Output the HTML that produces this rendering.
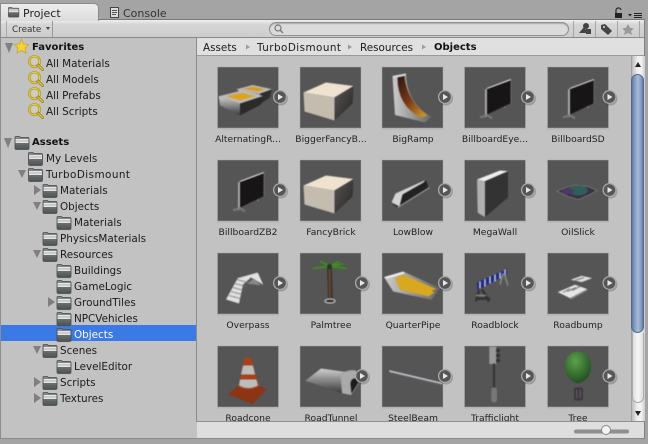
<!DOCTYPE html>
<html><head><meta charset="utf-8"><style>
html,body{margin:0;padding:0}
body{width:648px;height:444px;position:relative;overflow:hidden;background:#a4a4a4;font-family:"DejaVu Sans","Liberation Sans",sans-serif;color:#111}
div{position:absolute;box-sizing:border-box}
.t{white-space:nowrap;font-size:10.4px;line-height:14px;height:14px;color:#1a1a1a;margin-top:1px}
.b{font-weight:bold;font-size:10px;color:#111}
.l{white-space:nowrap;font-size:9.2px;line-height:12px;height:12px;width:82px;text-align:center;color:#222;margin-top:1px}
.w{letter-spacing:.45px}
svg{position:absolute;left:0;top:0}
.m{filter:blur(.4px)}
</style></head><body>
<div style="left:0;top:19px;width:645px;height:420px;background:#c2c2c2;border-left:1px solid #8d8d8d"></div>
<div style="left:0;top:19px;width:645px;height:1px;background:#777"></div>
<div style="left:1px;top:20px;width:644px;height:18px;background:linear-gradient(#f0f0f0,#d6d6d6 25%,#cdcdcd);border-bottom:1px solid #8a8a8a"></div>
<div style="left:0;top:3px;width:99px;height:18px;background:linear-gradient(#ececec,#dcdcdc);border:1px solid #8a8a8a;border-bottom:none;border-radius:0 5px 0 0"></div>
<div style="left:197px;top:38px;width:448px;height:18px;background:#e0e0e0;border-bottom:1px solid #9a9a9a"></div>
<div style="left:196px;top:38px;width:1px;height:384px;background:#8b8b8b"></div>
<div style="left:1px;top:325px;width:195px;height:16px;background:#3b79e6"></div>
<div style="left:197px;top:421px;width:448px;height:18px;background:#dedede;border-top:1px solid #8f8f8f"></div>
<div style="left:644px;top:19px;width:1px;height:420px;background:#808080"></div>
<div style="left:0;top:438px;width:645px;height:1px;background:#8a8a8a"></div>
<div style="left:6px;top:21px;width:47px;height:16px;border-left:1px solid #aaa;border-right:1px solid #999"></div>
<div style="left:269px;top:22px;width:300px;height:14px;border-radius:7px;border:1px solid #8f8f8f;background:#dbdbdb;box-shadow:inset 0 1px 1px #aaa"></div>
<div style="left:573px;top:21px;width:1px;height:16px;background:#a5a5a5"></div>
<div style="left:595px;top:21px;width:1px;height:16px;background:#a5a5a5"></div>
<div style="left:617px;top:21px;width:1px;height:16px;background:#a5a5a5"></div>
<div style="left:639px;top:21px;width:1px;height:16px;background:#a5a5a5"></div>

<div style="left:631px;top:56px;width:14px;height:365px;background:linear-gradient(90deg,#bbb,#eee 40%,#f3f3f3 70%,#ccc);border-left:1px solid #a0a0a0"></div>
<div style="left:631px;top:74px;width:13px;height:259px;border-radius:7px;background:linear-gradient(90deg,#5f7da8,#8aa2c6 30%,#a9bcd8 55%,#7e98bf 85%,#58739c);border:1px solid #52698c"></div>
<div style="left:632px;top:333px;width:12px;height:70px;border-radius:0 0 7px 7px;background:linear-gradient(90deg,#ddd,#f7f7f7 50%,#ddd);border:1px solid #aaa;border-top:none"></div>

<svg width="648" height="444" viewBox="0 0 648 444">
<defs>
<linearGradient id="fg" x1="0" y1="0" x2="0" y2="1"><stop offset="0" stop-color="#8a9090"/><stop offset="1" stop-color="#4c5254"/></linearGradient>
<linearGradient id="gm" x1="0" y1="0" x2="0" y2="1"><stop offset="0" stop-color="#d0d0d0"/><stop offset="1" stop-color="#3a3a3a"/></linearGradient>
<linearGradient id="gw" x1="0" y1="0" x2="1" y2="0"><stop offset="0" stop-color="#bbb"/><stop offset="1" stop-color="#555"/></linearGradient>
<linearGradient id="gr" x1="0" y1="0" x2="1" y2="1"><stop offset="0" stop-color="#2a1512"/><stop offset=".5" stop-color="#7a3a15"/><stop offset="1" stop-color="#e0a420"/></linearGradient>
<linearGradient id="gs" x1="0" y1="0" x2="1" y2="0"><stop offset="0" stop-color="#ccc"/><stop offset="1" stop-color="#666"/></linearGradient>
<linearGradient id="gd" x1="0" y1="0" x2="1" y2="1"><stop offset="0" stop-color="#5a5855"/><stop offset="1" stop-color="#222"/></linearGradient>
<radialGradient id="gt" cx=".4" cy=".3" r=".75"><stop offset="0" stop-color="#5da24c"/><stop offset="1" stop-color="#1c4a1e"/></radialGradient>
<g id="folder"><path d="M0.500 3V1.500Q.5 .5 1.500 .5H5L6 1.500H13.500Q14.500 1.500 14.500 3V12Q14.500 13.500 13 13.500H2Q.5 13.500 .5 12Z" fill="url(#fg)" stroke="#4a4a4a" stroke-width=".8"/><path d="M1 3H14V6.500H1Z" fill="#e4e4e4"/><path d="M1 5H14" stroke="#b4b4b4"/><path d="M1 6.500H14" stroke="#f5f5f5" stroke-width=".8"/></g>
<g id="find"><circle cx="6.500" cy="6.500" r="5.200" fill="#e2e2d0" fill-opacity=".35" stroke="#8a7a20" stroke-width="2.200"/><circle cx="6.500" cy="6.500" r="5.200" fill="none" stroke="#ecca26" stroke-width="1.300"/><path d="M10 10L14.500 14.500" stroke="#8a7a20" stroke-width="2.800" stroke-linecap="round"/><path d="M10 10L14.500 14.500" stroke="#e6c222" stroke-width="1.500" stroke-linecap="round"/></g>
<g id="play"><circle cx="1" cy="1.500" r="7" fill="#000" opacity=".2"/><circle r="6.400" fill="#565656" stroke="#a8a8a8" stroke-width="1.300"/><path d="M-2-3L3 0L-2 3Z" fill="#e8e8e8"/></g>
<g id="tile"><rect x="-1" y="-1" width="62" height="63" fill="#000" opacity=".07"/><rect x="-.5" y="-.5" width="61" height="61" fill="#7f7f7f"/><rect x="0" y="0" width="60" height="60" fill="#555"/></g>
<g id="bill" class="m"><path d="M22 21L46 12V36L22 47.500Z" fill="#171516"/><path d="M22 21L46 12" stroke="#ddd" stroke-width="1.200" fill="none"/><path d="M46 12V36" stroke="#777" stroke-width=".8"/><path d="M22 47.500L46 36" stroke="#555" stroke-width=".8"/><path d="M20 22L22 21V49L20 50Z" fill="#aaa"/><path d="M15 50L22 47.500L27 51" stroke="#7a7a7a" stroke-width="2" fill="none"/><path d="M40 39V40.500" stroke="#777" stroke-width="2"/></g>
<g id="brick" class="m"><path d="M3 25L25.500 15L53 18.500L34 30Z" fill="#efe3cf"/><path d="M3 25L34 30V53L4 44Z" fill="#c4bcae"/><path d="M34 30L53 18.500L52 36L34 53Z" fill="url(#gd)"/></g>
</defs>

<!-- tab icons -->
<g transform="translate(8,7) scale(.75)"><use href="#folder"/></g>
<path d="M110.500 7.500H118.500V17.500H110.500Z" fill="#ddd" stroke="#444"/><path d="M112 10.500H117M112 12.500H117M112 14.500H116" stroke="#555"/>
<path d="M616 13V11A2.500 2.500 0 0 1 621 10" stroke="#222" fill="none" stroke-width="1.200"/><rect x="615" y="13" width="7" height="5" fill="#222"/>
<path d="M628 14L632 14L630 16.500Z" fill="#222"/><path d="M634 13.500H642M634 15.500H642M634 17.500H642" stroke="#222"/>
<path d="M46 27L50 27L48 30Z" fill="#444"/>
<circle cx="278" cy="28" r="3" fill="none" stroke="#777" stroke-width="1.200"/><path d="M280 30L283 33" stroke="#777" stroke-width="1.400"/>
<!-- toolbar icons -->
<circle cx="586" cy="26" r="3" fill="#444"/><path d="M579 33L584 27L588 33Z" fill="#444"/><rect x="586" y="29" width="5" height="5" fill="#444"/>
<path d="M601 25L605 24L612 31L608 35L601 29Z" fill="#444"/><circle cx="604" cy="27" r="1" fill="#ddd"/>
<path d="M628 24L630 27.800L634 28.500L631 31L632 35L628 33L624 35L625 31L622 28.500L626 27.800Z" fill="#999"/>
<!-- breadcrumb arrows -->
<path d="M246 44.500L250 47L246 49.500ZM348 44.500L352 47L348 49.500ZM422 44.500L426 47L422 49.500Z" fill="#999"/>
<!-- scroll arrows -->
<path d="M638 62L641 67H635Z" fill="#222"/><path d="M635 411H641L638 416Z" fill="#222"/>
<!-- slider -->
<rect x="574" y="429.500" width="55" height="4" rx="2" fill="#8f8f8f"/><circle cx="606" cy="430" r="4.500" fill="#f4f4f4" stroke="#888"/>

<!-- tree icons -->
<path d="M5 43H13L9 53Z" fill="#808080"/>
<path d="M21.500 39L23.500 44L28.500 44.500L25 48L26 53L21.500 50.500L17 53L18 48L14.500 44.500L19.500 44Z" fill="#f5d431" stroke="#c7a52c" stroke-width=".8"/>
<use href="#find" x="28" y="55"/><use href="#find" x="28" y="71"/><use href="#find" x="28" y="87"/><use href="#find" x="28" y="103"/>
<path d="M4 138H12L8 148Z" fill="#808080"/><use href="#folder" x="14.500" y="136"/>
<use href="#folder" x="28" y="152"/>
<path d="M18 170H26L22 178Z" fill="#808080"/><use href="#folder" x="28" y="168"/>
<path d="M34 185L41 190L34 195Z" fill="#808080"/><use href="#folder" x="42.500" y="184"/>
<path d="M33 202H41L37 210Z" fill="#808080"/><use href="#folder" x="42.500" y="200"/>
<use href="#folder" x="56.500" y="216"/>
<use href="#folder" x="42.500" y="232"/>
<path d="M33 250H41L37 258Z" fill="#808080"/><use href="#folder" x="42.500" y="248"/>
<use href="#folder" x="56.500" y="264"/><use href="#folder" x="56.500" y="280"/>
<path d="M48 297L55 302L48 307Z" fill="#808080"/><use href="#folder" x="56.500" y="296"/>
<use href="#folder" x="56.500" y="312"/><use href="#folder" x="56.500" y="328"/>
<path d="M33 346H41L37 354Z" fill="#808080"/><use href="#folder" x="42.500" y="344"/>
<use href="#folder" x="56.500" y="360"/>
<path d="M34 377L41 382L34 387Z" fill="#808080"/><use href="#folder" x="42.500" y="376"/>
<path d="M34 393L41 398L34 403Z" fill="#808080"/><use href="#folder" x="42.500" y="392"/>

<!-- row1 -->
<g transform="translate(218,67.500)"><use href="#tile"/><g class="m">
<path d="M18.700 21.800L42 26L43 36L25 27Z" fill="url(#gm)"/><path d="M42 26L54 21.800L52 30L43 36Z" fill="#2e2e2e"/><path d="M18.700 21.800L34.700 17.500L54 21.800L42 26Z" fill="#bdbdbd"/><path d="M24 21.500L35 19.200L47 21.800L40 24Z" fill="#d89c1f"/>
<path d="M.7 28.800L22 36V48L2 38Z" fill="url(#gm)"/><path d="M22 36L45 28.500L43 37L22 48Z" fill="#2a2a2a"/><path d="M.7 28.800L24 23L45 28.500L22 36Z" fill="#bdbdbd"/><path d="M8 28.500L24 25.200L38 28.500L22 33Z" fill="#dca31f"/></g></g>
<g transform="translate(300.500,67.500)"><use href="#tile"/><use href="#brick"/></g>
<g transform="translate(382.500,67.500)"><use href="#tile"/><g class="m">
<path d="M10 8.500L23.500 6Q24 36 49 49L42.500 55L12.500 47.500Z" fill="url(#gs)"/><path d="M15 10L22 8.500Q24 33 45 48L38 50Q15 38 15 10Z" fill="url(#gr)"/><path d="M10 8.500L23.500 6L23 8L11 10Z" fill="#ddd"/></g></g>
<g transform="translate(465,67.500)"><use href="#tile"/><use href="#bill"/></g>
<g transform="translate(548,67.500)"><use href="#tile"/><use href="#bill"/></g>
<!-- row2 -->
<g transform="translate(218,160.500)"><use href="#tile"/><use href="#bill"/></g>
<g transform="translate(300.500,160.500)"><use href="#tile"/><use href="#brick"/></g>
<g transform="translate(382.500,160.500)"><use href="#tile"/><g class="m"><path d="M8.500 42L15 34L43.500 19.500L46 27L15 47Z" fill="#222"/><path d="M9 42L13 33L43 19.500L41 22L20 34L17 46Z" fill="#d4d4d4"/><path d="M15 47L47 27" stroke="#aaa"/></g></g>
<g transform="translate(465,160.500)"><use href="#tile"/><g class="m"><path d="M20 20.600L43 10.600V37L20 56.600Z" fill="#333"/><path d="M12 19L20 20.600V56.600L12.700 52.300Z" fill="#b0b0b0"/><path d="M12 19L35 10L43 10.600L20 20.600Z" fill="#eee"/></g></g>
<g transform="translate(548,160.500)"><use href="#tile"/><g class="m"><path d="M9 30.600L18 27L27 24.600L40 26L49 30L42 34L30.700 39L20 36Z" fill="#3a3048" stroke="#7a7a70" stroke-width=".8"/><ellipse cx="30" cy="30" rx="10" ry="5" fill="#2d6058"/><ellipse cx="20" cy="31" rx="6" ry="3" fill="#4a3a6a"/></g></g>
<!-- row3 -->
<g transform="translate(218,253.500)"><use href="#tile"/><g class="m">
<path d="M8 46L19.700 24.600L39.700 19L45.300 31.300L33 24L25 31L21 50Z" fill="#e0e0e0"/><path d="M29 30L36 25L43 32Z" fill="#888"/><path d="M11 42L22 45M13 38L24 41M15 34L26 37M17 30L28 33M19 26L30 29" stroke="#777" stroke-width=".9"/></g></g>
<g transform="translate(300.500,253.500)"><use href="#tile"/><g class="m">
<path d="M26.500 15L31.500 15L32.500 46H27.500Z" fill="#43342a"/><path d="M29 16L29.500 46" stroke="#6b5a48"/><ellipse cx="29.500" cy="47.500" rx="5" ry="2" fill="#333" stroke="#ddd"/><path d="M29 12.500L13 15M29 12.500L20 8M29 12.500L25 10M29 12.500L38 8.500M29 12.500L45 15M29 12.500L42 10.500M29 12.500L20 14" stroke="#3f8a22" stroke-width="2" stroke-linecap="round"/><circle cx="29" cy="13" r="2.500" fill="#1d3d14"/></g></g>
<g transform="translate(382.500,253.500)"><use href="#tile"/><g class="m"><path d="M1.500 23.600L20.800 18L57.500 34.600L49 46.300L10.800 38Z" fill="url(#gs)"/><path d="M1.500 23.600L20.800 18L22 20L5 25Z" fill="#eee"/><path d="M12.500 24.600L20.800 21.300L54 35.600L49 37L52 39L46 43L17.500 36.300Z" fill="#d8a81f"/></g></g>
<g transform="translate(465,253.500)"><use href="#tile"/><g class="m"><path d="M12 29L41.700 15.600L42.300 20.300L12.300 37Z" fill="#1d2a8a"/><path d="M15 28L15 35M20 25.500L20 33M25 23L25 30M30 21L30 28M35 19L35 25M40 16L40 22" stroke="#ccc" stroke-width="1.500"/><path d="M14 37L11 48M17 36L24 48M11 45H25" stroke="#333" stroke-width="2.500"/><path d="M11 42H21M38 20L35 31M39 20L43 32" stroke="#888" stroke-width="1.500"/></g></g>
<g transform="translate(548,253.500)"><use href="#tile"/><g class="m"><path d="M22.700 26.300L33.700 22.300L44.300 24.600L33.700 28.600Z" fill="#ddd"/><path d="M9.700 38.600L27 31.300L39.300 35.600L22 44.600Z" fill="#e6e6e6"/><path d="M27 27L36 24M24 37L32 33M19 38L28 34M15 39L22 35" stroke="#777"/><path d="M22 44.600L39.300 35.600V37L23 46Z" fill="#888"/></g></g>
<!-- row4 -->
<g transform="translate(218,346.500)"><use href="#tile"/><g class="m"><path d="M9.700 47.600L21 39H40L48.700 42.600L34.700 57.600Z" fill="#8c3413"/><path d="M26.500 11.500Q30 9.500 33 11.500L41 40Q30 46 20.500 40Z" fill="#a8421a"/><path d="M25 19L35 19L37 28L23 28ZM22 33L38.500 33L40 39Q30 44 21 39Z" fill="#bdbdbd"/></g></g>
<g transform="translate(300.500,346.500)"><use href="#tile"/><g class="m"><path d="M4.800 34.300L20.500 22L43.800 25.300L41.500 46.600Z" fill="url(#gm)"/><path d="M40 27Q50 22 55.500 24.300L58.800 36L50.500 48.600L41.500 46.600Z" fill="#aaa"/><path d="M50 38Q50 31 56 32L58 36L51 47Z" fill="#1c1c1c"/></g></g>
<g transform="translate(382.500,346.500)"><use href="#tile"/><g class="m"><path d="M6.800 24.500L60 37" stroke="#c8c8d4" stroke-width="1.600"/><path d="M7 26L60 39" stroke="#666" stroke-width=".8"/></g></g>
<g transform="translate(465,346.500)"><use href="#tile"/><g class="m"><rect x="24.300" y="0" width="7" height="17.500" fill="#999"/><circle cx="33" cy="4" r="2" fill="#333"/><circle cx="33" cy="9" r="2" fill="#333"/><circle cx="33" cy="14" r="2" fill="#333"/><rect x="28" y="17" width="2" height="26" fill="#333"/><rect x="26.300" y="41" width="5.700" height="15" rx="2.500" fill="#777"/></g></g>
<g transform="translate(548,346.500)"><use href="#tile"/><g class="m"><path d="M27 42H34M27 53H34M27 42V53M30.500 42V53M34 42V53" stroke="#3a2c3a" stroke-width="1.400"/><path d="M17 20Q17 6 30 5Q43 6 43 20Q43 33 30 37Q17 33 17 20Z" fill="url(#gt)"/></g></g>

<!-- play buttons -->
<use href="#play" x="280" y="97"/><use href="#play" x="445" y="97"/><use href="#play" x="528" y="97"/><use href="#play" x="609.500" y="97"/>
<use href="#play" x="280" y="190"/><use href="#play" x="445" y="190"/><use href="#play" x="528" y="190"/><use href="#play" x="609.500" y="190"/>
<use href="#play" x="280" y="283"/><use href="#play" x="362" y="283"/><use href="#play" x="445" y="283"/><use href="#play" x="528" y="283"/><use href="#play" x="609.500" y="283"/>
<use href="#play" x="362" y="376"/><use href="#play" x="445" y="376"/><use href="#play" x="528" y="376"/><use href="#play" x="609.500" y="376"/>
</svg>

<div class="t" style="left:23px;top:6px;font-size:11px;color:#222">Project</div>
<div class="t" style="left:123px;top:6px;font-size:11px;color:#333">Console</div>
<div class="t" style="left:12px;top:22px;font-size:8.800px;color:#333">Create</div>

<div class="t b" style="left:32px;top:40px">Favorites</div>
<div class="t" style="left:46px;top:56px">All Materials</div>
<div class="t" style="left:46px;top:72px">All Models</div>
<div class="t" style="left:46px;top:88px">All Prefabs</div>
<div class="t" style="left:46px;top:104px">All Scripts</div>
<div class="t b" style="left:32px;top:135px">Assets</div>
<div class="t" style="left:46px;top:151px">My Levels</div>
<div class="t w" style="left:46px;top:167px">TurboDismount</div>
<div class="t" style="left:60px;top:183px">Materials</div>
<div class="t" style="left:60px;top:199px">Objects</div>
<div class="t" style="left:74px;top:215px">Materials</div>
<div class="t" style="left:60px;top:231px">PhysicsMaterials</div>
<div class="t" style="left:60px;top:247px">Resources</div>
<div class="t" style="left:74px;top:263px">Buildings</div>
<div class="t" style="left:74px;top:279px">GameLogic</div>
<div class="t" style="left:74px;top:295px">GroundTiles</div>
<div class="t" style="left:74px;top:311px">NPCVehicles</div>
<div class="t" style="left:74px;top:327px;color:#fff">Objects</div>
<div class="t" style="left:60px;top:343px">Scenes</div>
<div class="t" style="left:74px;top:359px">LevelEditor</div>
<div class="t" style="left:60px;top:375px">Scripts</div>
<div class="t" style="left:60px;top:391px">Textures</div>

<div class="t" style="left:203px;top:40px">Assets</div>
<div class="t w" style="left:257px;top:40px">TurboDismount</div>
<div class="t" style="left:360px;top:40px">Resources</div>
<div class="t b" style="left:434px;top:40px">Objects</div>

<div class="l" style="left:207px;top:133px">AlternatingR...</div>
<div class="l" style="left:290px;top:133px">BiggerFancyB...</div>
<div class="l" style="left:372px;top:133px">BigRamp</div>
<div class="l" style="left:454px;top:133px">BillboardEye...</div>
<div class="l" style="left:537px;top:133px">BillboardSD</div>
<div class="l" style="left:207px;top:226px">BillboardZB2</div>
<div class="l" style="left:290px;top:226px">FancyBrick</div>
<div class="l" style="left:372px;top:226px">LowBlow</div>
<div class="l" style="left:454px;top:226px">MegaWall</div>
<div class="l" style="left:537px;top:226px">OilSlick</div>
<div class="l" style="left:207px;top:319px">Overpass</div>
<div class="l" style="left:290px;top:319px">Palmtree</div>
<div class="l" style="left:372px;top:319px">QuarterPipe</div>
<div class="l" style="left:454px;top:319px">Roadblock</div>
<div class="l" style="left:537px;top:319px">Roadbump</div>
<div style="left:197px;top:410px;width:434px;height:11px;overflow:hidden">
<div class="l" style="left:10px;top:2px">Roadcone</div>
<div class="l" style="left:93px;top:2px">RoadTunnel</div>
<div class="l" style="left:175px;top:2px">SteelBeam</div>
<div class="l" style="left:257px;top:2px">Trafficlight</div>
<div class="l" style="left:340px;top:2px">Tree</div>
</div>
</body></html>
